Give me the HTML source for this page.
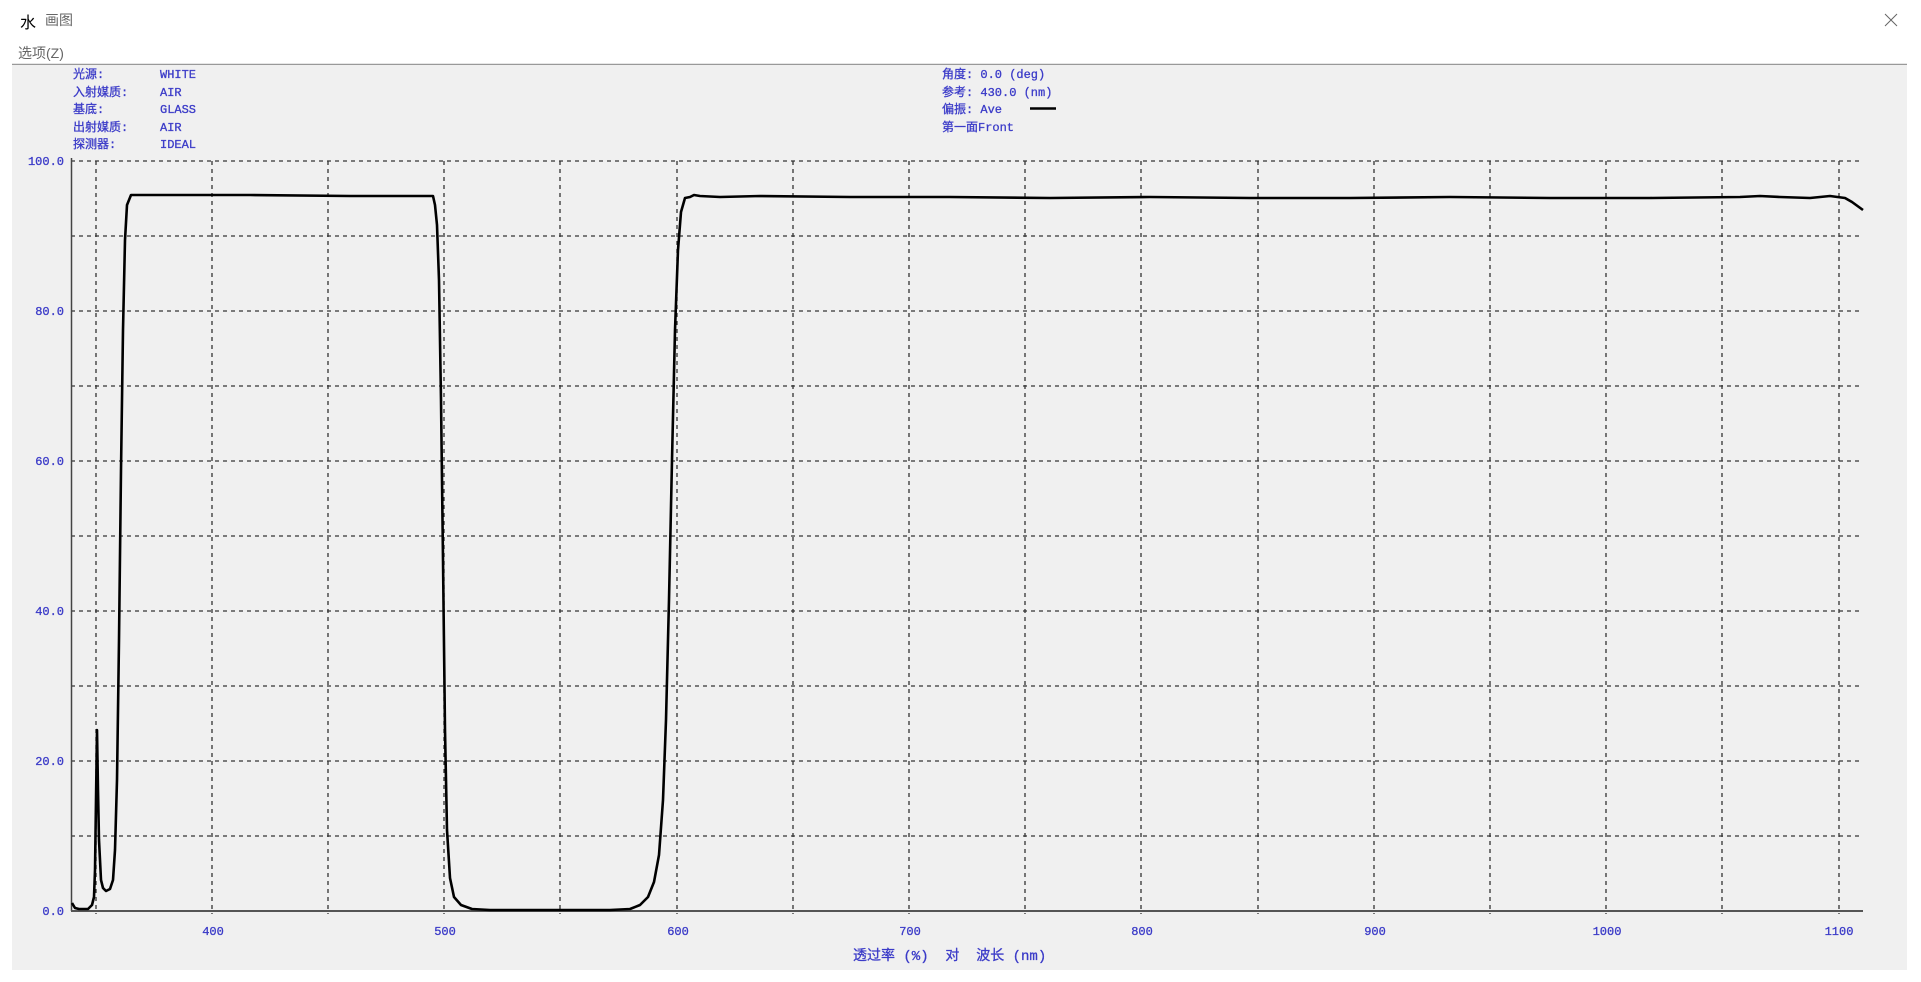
<!DOCTYPE html>
<html><head><meta charset="utf-8"><style>
html,body{margin:0;padding:0;background:#fff;width:1921px;height:982px;overflow:hidden}
body{position:relative;font-family:"Liberation Sans","Noto Sans CJK SC",sans-serif}
.t{position:absolute;color:#666;font-size:14px}
svg{position:absolute;left:0;top:0}
</style></head><body>
<div class="t" style="left:20px;top:9px;font-size:16px;color:#000;font-family:'Noto Sans CJK SC',sans-serif">水</div>
<div class="t" style="left:45px;top:10px">画图</div>
<div class="t" style="left:18px;top:43px">选项(Z)</div>
<svg width="1921" height="982" xmlns="http://www.w3.org/2000/svg">
<path d="M1885 14 L1897 26 M1897 14 L1885 26" stroke="#666" stroke-width="1"/>
<line x1="12" y1="64.5" x2="1907" y2="64.5" stroke="#999" stroke-width="1.5"/>
<rect x="12" y="65" width="1895" height="905" fill="#f0f0f0"/>
<g stroke="#333" stroke-width="1.3" stroke-dasharray="4,4">
<line x1="71" y1="161" x2="1863" y2="161"/>
<line x1="71" y1="236" x2="1863" y2="236"/>
<line x1="71" y1="311" x2="1863" y2="311"/>
<line x1="71" y1="386" x2="1863" y2="386"/>
<line x1="71" y1="461" x2="1863" y2="461"/>
<line x1="71" y1="536" x2="1863" y2="536"/>
<line x1="71" y1="611" x2="1863" y2="611"/>
<line x1="71" y1="686" x2="1863" y2="686"/>
<line x1="71" y1="761" x2="1863" y2="761"/>
<line x1="71" y1="836" x2="1863" y2="836"/>
<line x1="96" y1="161" x2="96" y2="914"/>
<line x1="212" y1="161" x2="212" y2="914"/>
<line x1="328" y1="161" x2="328" y2="914"/>
<line x1="444" y1="161" x2="444" y2="914"/>
<line x1="560" y1="161" x2="560" y2="914"/>
<line x1="677" y1="161" x2="677" y2="914"/>
<line x1="793" y1="161" x2="793" y2="914"/>
<line x1="909" y1="161" x2="909" y2="914"/>
<line x1="1025" y1="161" x2="1025" y2="914"/>
<line x1="1141" y1="161" x2="1141" y2="914"/>
<line x1="1258" y1="161" x2="1258" y2="914"/>
<line x1="1374" y1="161" x2="1374" y2="914"/>
<line x1="1490" y1="161" x2="1490" y2="914"/>
<line x1="1606" y1="161" x2="1606" y2="914"/>
<line x1="1722" y1="161" x2="1722" y2="914"/>
<line x1="1839" y1="161" x2="1839" y2="914"/>
</g>
<line x1="71.5" y1="158" x2="71.5" y2="911" stroke="#444" stroke-width="1.5"/>
<line x1="71" y1="911" x2="1863" y2="911" stroke="#555" stroke-width="2"/>
<path d="M72 903 L75 908 L79 909 L88 909 L92 905 L94 897 L95 870 L96 800 L97 730 L98 790 L99 840 L101 880 L103 888 L106 891 L110 889 L113 880 L115 850 L117 780 L119 640 L121 470 L123 330 L125 240 L127 205 L131 195 L250 195 L350 196 L420 196 L433 196 L435 205 L437 225 L439 280 L441 400 L443 560 L445 730 L447 830 L450 878 L454 897 L461 905 L472 909 L490 910 L610 910 L630 909 L640 905 L648 897 L654 882 L659 855 L663 800 L666 720 L669 600 L672 460 L675 330 L678 250 L681 212 L685 198 L690 197 L694 195 L700 196 L720 197 L760 196 L850 197 L950 197 L1050 198 L1150 197 L1250 198 L1350 198 L1450 197 L1550 198 L1650 198 L1740 197 L1760 196 L1780 197 L1810 198 L1830 196 L1845 198 L1852 202 L1863 210" fill="none" stroke="#000" stroke-width="2.6" stroke-linejoin="round"/>
<line x1="1030" y1="108.5" x2="1056" y2="108.5" stroke="#000" stroke-width="2.5"/>
<g font-family="Liberation Mono, Noto Sans CJK SC, monospace" font-size="12" fill="#3b3bc8" stroke="#3b3bc8" stroke-width="0.3">
<text x="73" y="78">光源:</text><text x="160" y="78">WHITE</text>
<text x="73" y="96">入射媒质:</text><text x="160" y="96">AIR</text>
<text x="73" y="113">基底:</text><text x="160" y="113">GLASS</text>
<text x="73" y="131">出射媒质:</text><text x="160" y="131">AIR</text>
<text x="73" y="148">探测器:</text><text x="160" y="148">IDEAL</text>
<text x="942" y="78">角度: 0.0 (deg)</text>
<text x="942" y="96">参考: 430.0 (nm)</text>
<text x="942" y="113">偏振: Ave</text>
<text x="942" y="131">第一面Front</text>
<g text-anchor="end">
<text x="64" y="165">100.0</text>
<text x="64" y="315">80.0</text>
<text x="64" y="465">60.0</text>
<text x="64" y="615">40.0</text>
<text x="64" y="765">20.0</text>
<text x="64" y="915">0.0</text>
</g>
<g text-anchor="middle">
<text x="213" y="935">400</text>
<text x="445" y="935">500</text>
<text x="678" y="935">600</text>
<text x="910" y="935">700</text>
<text x="1142" y="935">800</text>
<text x="1375" y="935">900</text>
<text x="1607" y="935">1000</text>
<text x="1839" y="935">1100</text>
</g>
<text x="853" y="960" font-size="14" xml:space="preserve">透过率 (%)  对  波长 (nm)</text>
</g>
</svg>
</body></html>
